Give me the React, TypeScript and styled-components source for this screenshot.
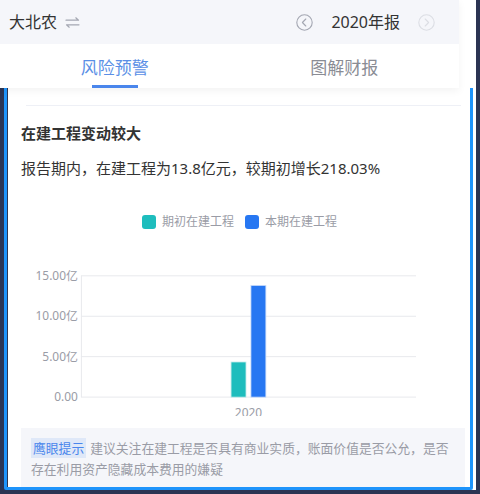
import React from "react";
import styled, { createGlobalStyle } from "styled-components";

const GlobalStyle = createGlobalStyle`
  html, body { margin: 0; padding: 0; }
  body {
    font-family: "Noto Sans", "Noto Sans CJK SC", sans-serif;
    background: #2b3453;
  }
`

const Page = styled.div`
  position: relative;
  width: 480px; height: 494px;
  overflow: hidden;
  background: #2b3453;
`

const Shell = styled.div`
  width: 476px;
  display: flex;
  flex-direction: column;
`

const TopRow = styled.div`
  position: relative;
  z-index: 1;
  background: #fff;
`

const Top = styled.div`
  width: 459px;
  box-shadow: 0 3px 8px rgba(0, 0, 0, 0.05);
`

const Header = styled.div`
  height: 44px;
  display: flex;
  align-items: center;
  padding: 0 24px 0 9px;
  background: #f5f6fa;
`

const Company = styled.div`
  font-size: 16px;
  color: #333;
  line-height: 22px;
`

const Swap = styled.svg`
  margin-left: 8px;
  width: 15px; height: 11px;
`

const YearBox = styled.div`
  margin-left: auto;
  display: flex;
  align-items: center;
  gap: 18px;
`

const YearText = styled.div`
  font-size: 16px;
  color: #333;
  line-height: 22px;
`

const Tabs = styled.div`
  height: 44px;
  display: flex;
  background: #fff;
`

const Tab = styled.div<{ $active?: boolean }>`
  flex: 1;
  display: flex;
  flex-direction: column;
  align-items: center;
  padding-top: 12px;
  box-sizing: border-box;
  font-size: 17px;
  line-height: 24px;
  color: ${p => p.$active ? '#5a8fe6' : '#8a8c94'};
`

const Indicator = styled.div<{ $active?: boolean }>`
  margin-top: 5px;
  width: 46px; height: 3px;
  background: ${p => p.$active ? '#4a86ec' : 'transparent'};
`

const Content = styled.div`
  margin-left: 8px;
  width: 468px;
  height: 402px;
  background: #fff;
  overflow: hidden;
  display: flex;
  flex-direction: column;
  padding: 0 11px 0 13px;
  box-sizing: border-box;
`

const Divider = styled.div`
  margin: 17px 4px 0 5px;
  height: 1px;
  background: #eef0f6;
`

const Title = styled.div`
  margin-top: 17px;
  font-size: 15px;
  font-weight: bold;
  line-height: 20px;
  color: #333;
`

const Desc = styled.div`
  margin-top: 15px;
  font-size: 15px;
  line-height: 20px;
  color: #333;
`

const Legend = styled.div`
  margin-top: 37px;
  display: flex;
  justify-content: center;
  gap: 11px;
  padding-right: 7px;
`

const LegendItem = styled.div`
  display: flex;
  align-items: center;
  gap: 6px;
  font-size: 12px;
  line-height: 14px;
  color: #9a9ca6;
`

const Swatch = styled.div<{ $color: string }>`
  width: 14px; height: 14px;
  border-radius: 3px;
  background: ${p => p.$color};
`

const Chart = styled.svg`
  margin: 11px 0 0 -13px;
  display: block;
  overflow: hidden;
  font-family: "Noto Sans", "Noto Sans CJK SC", sans-serif;
`

const Tip = styled.div`
  margin-top: 12px;
  flex-shrink: 0;
  background: #f5f6fa;
  padding: 10px 8px 10px 10px;
  font-size: 12.8px;
  line-height: 21px;
  color: #9a9ca6;
`

const TipTag = styled.span`
  background: #dfe8f8;
  color: #4a86ec;
  padding: 1px 2px;
  margin-right: 4px;
`

const Frame = styled.div`
  position: absolute;
  left: 4px; top: 4px;
  width: 469px; height: 486px;
  box-sizing: border-box;
  border: 3px solid #1e94fb;
  border-radius: 2px;
  pointer-events: none;
`

type CircleArrowProps = { dir: 'left' | 'right', color: string }
const CircleArrow = ({ dir, color }: CircleArrowProps) => {
  return <svg width="17" height="17" viewBox="0 0 17 17">
    <circle cx="8.5" cy="8.5" r="7.7" fill="none" stroke={color} strokeWidth="1.1"/>
    <path d={dir === 'left' ? 'M9.8 5 L6.4 8.5 L9.8 12' : 'M7.2 5 L10.6 8.5 L7.2 12'}
          fill="none" stroke={color} strokeWidth="1.1" strokeLinecap="round" strokeLinejoin="round"/>
  </svg>
}

const yTicks = [
  { label: '15.00亿', y: 36 },
  { label: '10.00亿', y: 76.7 },
  { label: '5.00亿', y: 117.3 },
  { label: '0.00', y: 158 },
]

const BarChart = () => {
  const max = 15
  const base = 158
  const h = 122
  const start = 4.34
  const end = 13.8
  return <Chart width="468" height="177" viewBox="0 0 468 177">
    {yTicks.map(t => <g key={t.label}>
      <line x1="72" x2="409" y1={t.y} y2={t.y} stroke="#e8e9ed" strokeWidth="1"/>
      <text x="69" y={t.y + 4} textAnchor="end" fontSize="12" fill="#9a9ca6">{t.label}</text>
    </g>)}
    <line x1="72.5" x2="72.5" y1="36" y2="158" stroke="#e8e9ed" strokeWidth="1"/>
    <rect x="223" y={base - start / max * h} width="15" height={start / max * h}
          fill="#1ebdbd" stroke="#bfeaea" strokeWidth="0.8"/>
    <rect x="243" y={base - end / max * h} width="15" height={end / max * h}
          fill="#2777f2" stroke="#c6dafa" strokeWidth="0.8"/>
    <text x="240.5" y="178" textAnchor="middle" fontSize="12" fill="#9a9ca6">2020</text>
  </Chart>
}

const App = () => {
  return <Page>
    <GlobalStyle/>
    <Shell>
      <TopRow>
        <Top>
          <Header>
            <Company>大北农</Company>
            <Swap viewBox="0 0 15 11">
              <path d="M1 3.2 H13.5 L10.8 0.8 M14 7.8 H1.5 L4.2 10.2" fill="none" stroke="#a4a7b2"
                    strokeWidth="1.2" strokeLinecap="round" strokeLinejoin="round"/>
            </Swap>
            <YearBox>
              <CircleArrow dir="left" color="#a4a7b2"/>
              <YearText>2020年报</YearText>
              <CircleArrow dir="right" color="#dcdee4"/>
            </YearBox>
          </Header>
          <Tabs>
            <Tab $active>风险预警<Indicator $active/></Tab>
            <Tab>图解财报<Indicator/></Tab>
          </Tabs>
        </Top>
      </TopRow>
      <Content>
        <Divider/>
        <Title>在建工程变动较大</Title>
        <Desc>报告期内，在建工程为13.8亿元，较期初增长218.03%</Desc>
        <Legend>
          <LegendItem><Swatch $color="#1ebdbd"/>期初在建工程</LegendItem>
          <LegendItem><Swatch $color="#2777f2"/>本期在建工程</LegendItem>
        </Legend>
        <BarChart/>
        <Tip>
          <TipTag>鹰眼提示</TipTag>
          建议关注在建工程是否具有商业实质，账面价值是否公允，是否存在利用资产隐藏成本费用的嫌疑
        </Tip>
      </Content>
    </Shell>
    <Frame/>
  </Page>
}
export default App
